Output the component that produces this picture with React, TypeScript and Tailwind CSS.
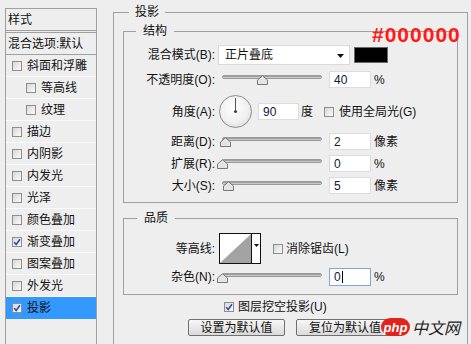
import React from "react";

const SideItems = [
  { label: "斜面和浮雕", indent: false, on: false },
  { label: "等高线", indent: true, on: false },
  { label: "纹理", indent: true, on: false },
  { label: "描边", indent: false, on: false },
  { label: "内阴影", indent: false, on: false },
  { label: "内发光", indent: false, on: false },
  { label: "光泽", indent: false, on: false },
  { label: "颜色叠加", indent: false, on: false },
  { label: "渐变叠加", indent: false, on: true },
  { label: "图案叠加", indent: false, on: false },
  { label: "外发光", indent: false, on: false },
  { label: "投影", indent: false, on: true, active: true },
];

function Check({ on }: { on?: boolean }) {
  return (
    <span className="relative inline-block w-[10px] h-[10px] shrink-0 border border-[#8e8e8e] bg-gradient-to-br from-[#d6d6d6] to-[#fbfbfb]">
      {on && (
        <svg className="absolute left-0 top-0" width="8" height="8" viewBox="0 0 8 8">
          <path d="M1.2 4.2 L3.2 6.4 L7 1.2" fill="none" stroke="#2f4fa0" strokeWidth="1.6" />
        </svg>
      )}
    </span>
  );
}

function Slider({ pos }: { pos: number }) {
  return (
    <div className="relative w-[100px] h-[11px] shrink-0">
      <div className="absolute left-0 right-0 top-[1px] h-[4px] rounded-full border border-[#9a9a9a] bg-gradient-to-b from-[#8c8c8c] to-[#dedede]" />
      <svg className="absolute top-[1px]" style={{ left: pos }} width="11" height="10" viewBox="0 0 11 10">
        <path d="M0.5 9.5 V5 L5.5 0.7 L10.5 5 V9.5 Z" fill="#e4e4e4" stroke="#777777" />
      </svg>
    </div>
  );
}

function Field({ value, w = 42, h = 17, focus }: { value: string; w?: number; h?: number; focus?: boolean }) {
  return (
    <div
      className={
        "bg-white border flex items-center pl-[4px] text-[12px] leading-none text-[#141438] shrink-0 " +
        (focus ? "border-[#7ea7d8]" : "border-[#dcdcdc]")
      }
      style={{ width: w, height: h }}
    >
      {value}
      {focus && <span className="inline-block w-[1px] h-[12px] bg-black ml-[1px]" />}
    </div>
  );
}

function Label({ children }: { children: React.ReactNode }) {
  return <div className="w-[91px] shrink-0 text-right whitespace-nowrap">{children}</div>;
}

export default function App() {
  return (
    <div className="relative w-[471px] h-[344px] overflow-hidden bg-[#eeeeee] flex items-start text-[12px] leading-[16px] text-[#111111] font-['Liberation_Sans','Noto_Sans_CJK_SC',sans-serif]">
      {/* left style list */}
      <div className="ml-[5px] mt-[8px] w-[92px] h-[400px] shrink-0 border border-b-0 border-[#a0a0a0]">
        <div className="h-[22px] border-b border-[#a0a0a0] flex items-center pl-[2px]">样式</div>
        <div className="h-[2px] border-b border-[#a0a0a0]" />
        <div className="h-[22px] border-b border-[#a0a0a0] flex items-center pl-[2px] whitespace-nowrap">混合选项:默认</div>
        {SideItems.map((it) => (
          <div
            key={it.label}
            className={
              "h-[22px] border-b flex items-center whitespace-nowrap " +
              (it.active ? "bg-[#3399ff] border-[#3399ff]" : "border-[#fafafa]") +
              (it.indent ? " pl-[20px]" : " pl-[6px]")
            }
          >
            <Check on={it.on} />
            <span className="ml-[5px]">{it.label}</span>
          </div>
        ))}
      </div>

      {/* right settings */}
      <fieldset className="ml-[16px] mt-[4px] w-[355px] shrink-0 border border-[#a0a0a0] px-[9px] pb-[60px]">
        <legend className="ml-[6px] px-[6px] leading-[16px]">投影</legend>

        <fieldset className="mt-[3px] border border-[#a0a0a0] pb-[8px]">
          <legend className="ml-[12px] px-[7px] leading-[16px]">结构</legend>

          <div className="mt-[6px] h-[20px] flex items-center">
            <Label>混合模式(B):</Label>
            <div className="ml-[3px] w-[132px] h-[20px] bg-white border border-[#dadada] flex items-center pl-[6px] relative">
              正片叠底
              <svg className="absolute right-[5px] top-[8px]" width="7" height="4" viewBox="0 0 7 4">
                <path d="M0 0 H7 L3.5 4 Z" fill="#111" />
              </svg>
            </div>
            <div className="ml-[4px] w-[34px] h-[16px] bg-black border border-[#6a6a6a]" />
          </div>

          <div className="mt-[6px] h-[17px] flex items-center">
            <Label>不透明度(O):</Label>
            <div className="ml-[7px]">
              <Slider pos={35} />
            </div>
            <div className="ml-[7px]">
              <Field value="40" />
            </div>
            <span className="ml-[3px]">%</span>
          </div>

          <div className="mt-[7px] h-[33px] flex items-center">
            <Label>角度(A):</Label>
            <div className="ml-[4px] w-[33px] h-[33px] shrink-0 rounded-full border border-[#8c8c8c] bg-[radial-gradient(circle_at_45%_40%,#ffffff,#f0f0f0_55%,#cfcfcf)] relative">
              <svg className="absolute left-0 top-0" width="31" height="31" viewBox="0 0 31 31">
                <line x1="15.5" y1="2" x2="15.5" y2="15.5" stroke="#555" strokeWidth="1" />
                <circle cx="15.5" cy="15.5" r="1.6" fill="#444" />
              </svg>
            </div>
            <div className="ml-[6px]">
              <Field value="90" w={41} />
            </div>
            <span className="ml-[2px]">度</span>
            <span className="ml-[11px] flex items-center">
              <Check />
            </span>
            <span className="ml-[5px] whitespace-nowrap">使用全局光(G)</span>
          </div>

          <div className="mt-[5px] h-[17px] flex items-center">
            <Label>距离(D):</Label>
            <div className="ml-[7px]">
              <Slider pos={-2} />
            </div>
            <div className="ml-[7px]">
              <Field value="2" />
            </div>
            <span className="ml-[3px]">像素</span>
          </div>

          <div className="mt-[5px] h-[17px] flex items-center">
            <Label>扩展(R):</Label>
            <div className="ml-[7px]">
              <Slider pos={-5} />
            </div>
            <div className="ml-[7px]">
              <Field value="0" />
            </div>
            <span className="ml-[3px]">%</span>
          </div>

          <div className="mt-[5px] h-[17px] flex items-center">
            <Label>大小(S):</Label>
            <div className="ml-[7px]">
              <Slider pos={1} />
            </div>
            <div className="ml-[7px]">
              <Field value="5" />
            </div>
            <span className="ml-[3px]">像素</span>
          </div>
        </fieldset>

        <fieldset className="mt-[7px] border border-[#a0a0a0] pb-[8px]">
          <legend className="ml-[13px] px-[7px] leading-[16px]">品质</legend>

          <div className="mt-[7px] h-[31px] flex items-center">
            <Label>等高线:</Label>
            <div className="ml-[4px] w-[42px] h-[31px] shrink-0 border border-[#111] bg-white flex">
              <div className="w-[32px] h-full border-r border-[#111]">
                <svg width="31" height="29" viewBox="0 0 31 29">
                  <path d="M0 29 L31 0 V29 Z" fill="#a3a3a3" />
                </svg>
              </div>
              <div className="flex-1 relative">
                <svg className="absolute left-[2px] top-[10px]" width="5" height="3" viewBox="0 0 5 3">
                  <path d="M0 0 H5 L2.5 3 Z" fill="#111" />
                </svg>
              </div>
            </div>
            <span className="ml-[12px] flex items-center">
              <Check />
            </span>
            <span className="ml-[3px] whitespace-nowrap">消除锯齿(L)</span>
          </div>

          <div className="mt-[4px] h-[18px] flex items-center">
            <Label>杂色(N):</Label>
            <div className="ml-[7px]">
              <Slider pos={-5} />
            </div>
            <div className="ml-[7px]">
              <Field value="0" h={18} focus />
            </div>
            <span className="ml-[3px]">%</span>
          </div>
        </fieldset>

        <div className="mt-[5px] h-[14px] flex items-center ml-[101px]">
          <Check on />
          <span className="ml-[4px] whitespace-nowrap">图层挖空投影(U)</span>
        </div>

        <div className="mt-[5px] flex ml-[65px]">
          <button className="w-[97px] h-[17px] border border-[#707070] rounded-[2px] bg-gradient-to-b from-[#f7f7f7] to-[#dadada] flex items-center justify-center leading-none">
            设置为默认值
          </button>
          <button className="ml-[11px] w-[98px] h-[17px] border border-[#707070] rounded-[2px] bg-gradient-to-b from-[#f7f7f7] to-[#dadada] flex items-center justify-center leading-none">
            复位为默认值
          </button>
        </div>
      </fieldset>

      {/* annotation + watermark overlays */}
      <div className="absolute left-[372px] top-[24px] text-[21px] leading-none font-bold tracking-[1px] text-[#ff1a1a] font-['Liberation_Sans',sans-serif]">
        #000000
      </div>
      <div className="absolute left-[381px] top-[318px] flex items-center">
        <div className="w-[29px] h-[18px] rounded-full bg-[#e2231a] flex items-center justify-center text-white italic font-bold text-[13px] leading-none font-['Liberation_Sans',sans-serif]">
          php
        </div>
        <span className="ml-[2px] italic text-[16px] leading-none text-[#222] font-['Noto_Sans_CJK_SC',sans-serif]">中文网</span>
      </div>
    </div>
  );
}
